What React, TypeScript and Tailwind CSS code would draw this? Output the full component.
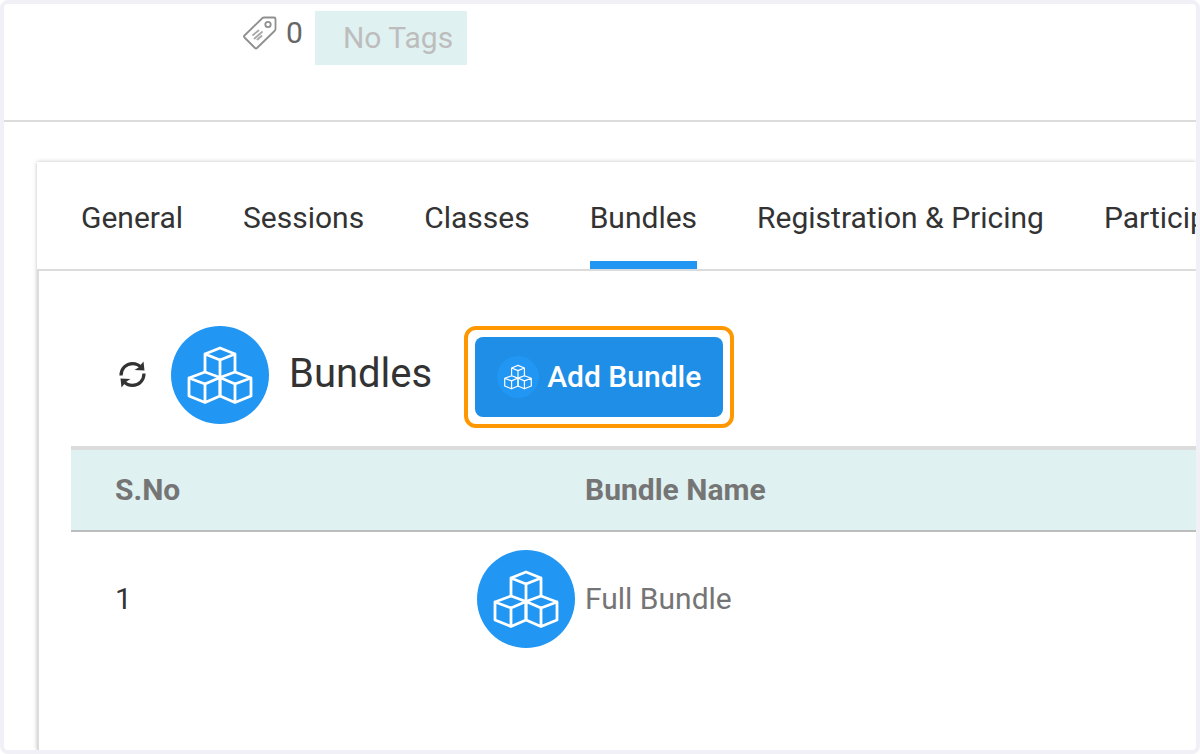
import { useState } from 'react';

interface Bundle {
  id: number;
  name: string;
}

const tabs = ['General', 'Sessions', 'Classes', 'Bundles', 'Registration & Pricing', 'Participants'];

const bundles: Bundle[] = [{ id: 1, name: 'Full Bundle' }];

function BundleIcon({ className }: { className: string }) {
  return (
    <svg viewBox="0 0 98 98" className={className} aria-hidden="true">
      <circle cx="49" cy="49" r="49" fill="#2196f3" />
      <g fill="none" stroke="#fff" strokeWidth="2.8" strokeLinejoin="round" strokeLinecap="round">
        {/* top cube */}
        <path d="M34 46V28L49 22L64 28V46M34 28L49 34L64 28M49 34V51" />
        {/* bottom left cube */}
        <path d="M34 46L18 52V70L34 76.5L49 70V51.5L34 46ZM18 52L34 58L49 51.5M34 58V76.5" />
        {/* bottom right cube */}
        <path d="M64 46L49 51.5V70L64 76.5L80 70V52L64 46ZM49 51.5L64 58L80 52M64 58V76.5" />
      </g>
    </svg>
  );
}

function RefreshIcon() {
  return (
    <svg viewBox="0 0 27 27" className="size-[27px]" aria-hidden="true">
      <g fill="none" stroke="#333" strokeWidth="3.2">
        <path d="M2 14.500C2 7.500 7.200 2.600 13.500 2.600C17.200 2.600 20 4 22 6.500" />
        <path d="M25 12.500C25 19.500 19.800 24.400 13.500 24.400C9.800 24.400 7 23 5 20.500" />
      </g>
      <path d="M24.500 0.500L25.500 9.500L15.500 9L19.500 6.500Z" fill="#333" />
      <path d="M2.500 26.500L1.500 17.500L11.500 18L7.500 20.500Z" fill="#333" />
    </svg>
  );
}

function TagIcon() {
  return (
    <svg viewBox="0 0 34 34" className="size-[34px]" fill="none" stroke="#8f8f8f" strokeWidth="1.8" strokeLinejoin="round" strokeLinecap="round" aria-hidden="true">
      <path d="M19.500 2Q20 1.500 21 1.500H31Q32.500 1.500 32.500 3V13Q32.500 14 31.500 15L14 32Q13 33 12 32L1.500 21.500Q0.500 20.500 1.500 19.500Z" />
      <circle cx="25" cy="8.500" r="2.700" />
      <path d="M10 19L15.500 14.500M11.500 22.500L19 16M14.500 23.500L18.500 20" stroke="#a8a8a8" />
    </svg>
  );
}

export default function App() {
  const [activeTab, setActiveTab] = useState('Bundles');

  return (
    <div className="min-h-screen flex flex-col overflow-hidden rounded-lg border-4 border-[#f1f0f6] bg-white font-[Roboto,sans-serif] text-[30px] leading-9 text-[#333]">
      {/* Tags */}
      <header className="flex h-[118px] items-start border-b-2 border-[#dcdcdc] pl-[239px]">
        <div className="flex items-center gap-[9px] pt-[11px] text-[#666]">
          <TagIcon />
          <span>0</span>
        </div>
        <span className="ml-3 mt-[7px] bg-[#e0f1f1] py-2 pl-7 pr-[14px] leading-[38px] text-[#bdbdbd]">No Tags</span>
      </header>

      <main className="ml-[33px] mt-10 flex flex-1 flex-col shadow-[0_0_4px_rgba(0,0,0,0.25)]">
        <nav className="flex h-[107px] shrink-0 items-stretch gap-[60px] overflow-hidden whitespace-nowrap pl-11">
          {tabs.map((tab) => (
            <button
              key={tab}
              type="button"
              onClick={() => setActiveTab(tab)}
              className={`shrink-0 border-b-8 pt-3 ${activeTab === tab ? 'border-[#2196f3]' : 'border-transparent'}`}
            >
              {tab}
            </button>
          ))}
        </nav>

        <section className="flex-1 border-l-2 border-t-2 border-[#dcdcdc] pl-8">
          <div className="flex h-[175px] items-center pl-12 pt-8">
            <button type="button" aria-label="Refresh">
              <RefreshIcon />
            </button>
            <BundleIcon className="ml-[25px] size-[98px]" />
            <h1 className="mb-0.5 ml-5 text-[40px] leading-[48px]">Bundles</h1>
            <div className="ml-8 mt-1 rounded-xl border-4 border-[#ff9800] p-[7px]">
              <button
                type="button"
                className="flex h-20 items-center gap-2 rounded-lg bg-[#1f8ee7] px-[22px] font-medium text-white"
              >
                <BundleIcon className="size-[42px]" />
                Add Bundle
              </button>
            </div>
          </div>

          <table className="w-full table-fixed border-collapse text-left">
            <thead>
              <tr className="h-[83px] border-b-2 border-t-4 border-b-[#bdbdbd] border-t-[#dcdcdc] bg-[#e0f1f1] text-[#757575]">
                <th className="w-[406px] pl-11 font-bold">S.No</th>
                <th className="pl-[108px] font-bold">Bundle Name</th>
              </tr>
            </thead>
            <tbody>
              {bundles.map((bundle) => (
                <tr key={bundle.id} className="h-[134px]">
                  <td className="pl-11">{bundle.id}</td>
                  <td>
                    <div className="flex items-center gap-[10px] text-[#757575]">
                      <BundleIcon className="size-[98px]" />
                      {bundle.name}
                    </div>
                  </td>
                </tr>
              ))}
            </tbody>
          </table>
        </section>
      </main>
    </div>
  );
}
